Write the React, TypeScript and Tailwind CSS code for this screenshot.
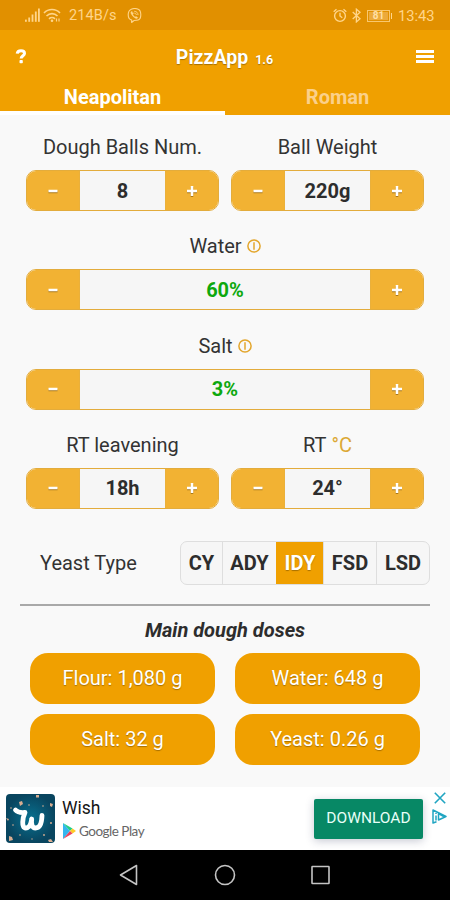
import { useState, type ReactNode } from "react";

const doses = ["Flour: 1,080 g", "Water: 648 g", "Salt: 32 g", "Yeast: 0.26 g"];

const yeasts = [
  { id: "CY", width: "w-[41px]" },
  { id: "ADY", width: "w-[54px]" },
  { id: "IDY", width: "w-[47px]" },
  { id: "FSD", width: "w-[53px]" },
  { id: "LSD", width: "w-[53px]" },
];

function StatusBar() {
  return (
    <div className="flex h-[30px] items-center justify-between bg-[#e19000] pl-[25px] pr-[15px] pt-px text-[#ffd58a]">
      <div className="flex items-center">
        <svg className="h-[15px] w-[15px]" viewBox="0 0 15 15" fill="currentColor" aria-hidden="true">
          <rect x="0" y="11.6" width="1.8" height="2.2" />
          <rect x="3.3" y="9.5" width="1.8" height="4.3" />
          <rect x="6.6" y="6.5" width="1.8" height="7.3" />
          <rect x="9.9" y="3.5" width="1.8" height="10.3" />
          <rect x="13" y="0.5" width="1.8" height="13.3" />
        </svg>
        <svg
          className="ml-[3px] h-[15px] w-[18px]"
          viewBox="0 0 18 15"
          fill="none"
          stroke="currentColor"
          strokeWidth="1.6"
          aria-hidden="true"
        >
          <path d="M1 5C5.4.4 12.600.4 17 5M3.500 8c3.200-3.200 7.800-3.200 11 0M6 10.800c1.700-1.600 4.300-1.600 6 0" />
          <circle cx="9" cy="12.800" r="1.300" fill="currentColor" stroke="none" />
          <path d="M13.500 10.400v3.200M16 10.400v3.200" strokeWidth="1.200" />
        </svg>
        <span className="ml-[8px] w-[49px] whitespace-nowrap text-[14.500px] leading-[18px] tracking-[0.1px]">
          214B/s
        </span>
        <svg
          className="ml-[9px] h-[15px] w-[15px]"
          viewBox="0 0 15 15"
          fill="none"
          stroke="currentColor"
          strokeWidth="1.1"
          strokeLinecap="round"
          aria-hidden="true"
        >
          <path d="M4.3 1.2C5.800.6 9.700.6 11.200 1.200c2 .8 2.600 2.500 2.600 5.600 0 3.200-.8 4.700-2.700 5.300-1.200.4-3.100.4-4.100.4l-2.300 2v-2.400C2.200 11.500 1.200 9.900 1.200 6.800c0-3.100 1-4.800 3.100-5.600z" />
          <path
            d="M4.700 3.500c-.8.4-1 1-.6 1.900 1 2.200 2.600 4 4.900 5 .9.400 1.400 0 1.700-.8l-1.700-1.200-.9.700C6.900 8.500 6.100 7.500 5.700 6.300l.7-.7z"
            fill="currentColor"
            strokeWidth=".5"
          />
          <path d="M7.600 3.300c2 .1 3.300 1.300 3.400 3.400M7.800 5.100c.9 0 1.400.6 1.500 1.500" strokeWidth=".9" />
        </svg>
      </div>
      <div className="flex items-center">
        <svg
          className="h-[15px] w-[14px]"
          viewBox="0 0 14 15"
          fill="none"
          stroke="currentColor"
          strokeWidth="1.4"
          aria-hidden="true"
        >
          <circle cx="7" cy="8" r="5.4" />
          <path d="M7 4.800V8l2.300 1.800M.7 3.700l2.800-2.400M13.300 3.700l-2.800-2.400" />
        </svg>
        <svg
          className="ml-[5px] h-[15px] w-[9px]"
          viewBox="0 0 9 15"
          fill="none"
          stroke="currentColor"
          strokeWidth="1.3"
          aria-hidden="true"
        >
          <path d="M.7 4l7.300 6.800-3.600 3.100V1.200L8 4.300.7 11" />
        </svg>
        <span className="ml-[6px] flex h-[12px] w-[23px] items-center justify-center border border-[#ffd58a]/80 p-px">
          <span className="flex h-full w-full items-center justify-center bg-[#f3bd62]/60 text-[10px] font-bold leading-[8px] text-[#ffe0a6]">
            81
          </span>
        </span>
        <span className="ml-px h-[6px] w-px bg-[#ffd58a]" />
        <span className="ml-[6px] w-[37px] whitespace-nowrap text-[14.700px] leading-[18px]">13:43</span>
      </div>
    </div>
  );
}

function Header({ tab, onTab }: { tab: string; onTab: (t: string) => void }) {
  return (
    <header className="bg-[#f0a000] font-bold text-white [text-shadow:0_1px_1px_rgba(60,40,0,0.4)]">
      <div className="flex h-[53px] items-center justify-between pl-[15px] pr-[16px]">
        <button type="button" aria-label="Help" className="w-[18px] text-left">
          <svg className="h-[15px] w-[12px]" viewBox="0 0 12 15" fill="none" aria-hidden="true">
            <path
              d="M2.200 4.600C2.400 2.600 3.900 1.700 6 1.700s3.500 1 3.500 2.700c0 2.200-3.400 2.500-3.400 5.200"
              stroke="white"
              strokeWidth="3"
            />
            <rect x="4.500" y="11.100" width="3.300" height="3.200" rx=".8" fill="white" />
          </svg>
        </button>
        <h1 className="flex items-baseline pt-[5px] text-[19.500px] leading-[24px]">
          PizzApp<span className="ml-[7px] text-[12.500px]">1.6</span>
        </h1>
        <button type="button" aria-label="Menu" className="flex w-[18px] flex-col gap-[2px]">
          <span className="h-[3px] w-full bg-white" />
          <span className="h-[3px] w-full bg-white" />
          <span className="h-[3px] w-full bg-white" />
        </button>
      </div>
      <div className="grid h-[32px] grid-cols-2 text-[20px] leading-[30px]">
        {["Neapolitan", "Roman"].map((t) => (
          <button
            key={t}
            type="button"
            onClick={() => onTab(t)}
            className={`border-b-[4px] pt-px font-bold leading-[27px] ${
              tab === t ? "border-white text-white" : "border-transparent text-[#fbd08a]"
            }`}
          >
            {t}
          </button>
        ))}
      </div>
    </header>
  );
}

function InfoIcon() {
  return (
    <svg
      className="ml-[5px] h-[14px] w-[14px]"
      viewBox="0 0 14 14"
      fill="none"
      stroke="#e3a62c"
      strokeWidth="1.500"
      aria-hidden="true"
    >
      <circle cx="7" cy="7" r="6.100" />
      <path d="M7 3.300v7.400" />
    </svg>
  );
}

function Stepper({ label, value, green }: { label: ReactNode; value: string; green?: boolean }) {
  const side = "flex w-[52px] shrink-0 items-center justify-center bg-[#f2b233]";
  const glyph = "h-[10px] w-[10px] drop-shadow-[0_1px_0.5px_rgba(80,50,0,0.45)]";
  return (
    <div className="flex min-w-0 flex-1 flex-col">
      <div className="flex h-[35px] items-center justify-center pb-[11px] text-[20px] leading-[24px]">{label}</div>
      <div className="flex h-[41px] overflow-hidden rounded-[10px] border border-[#e3ac3c] bg-[#f6f6f6]">
        <button type="button" aria-label="Decrease" className={side}>
          <svg className={glyph} viewBox="0 0 10 10" aria-hidden="true">
            <path d="M.5 5h9" stroke="white" strokeWidth="2.500" />
          </svg>
        </button>
        <div
          className={`flex flex-1 items-center justify-center border-x border-[#eab03b] text-[20px] font-bold leading-[24px] ${
            green ? "text-[#0da80d]" : "text-[#2d2d2d]"
          }`}
        >
          {value}
        </div>
        <button type="button" aria-label="Increase" className={side}>
          <svg className={glyph} viewBox="0 0 10 10" aria-hidden="true">
            <path d="M0 5h10M5 0v10" stroke="white" strokeWidth="2.500" />
          </svg>
        </button>
      </div>
    </div>
  );
}

function AdBanner() {
  return (
    <div className="flex h-[63px] bg-white pl-[6px]">
      <svg className="mt-[7px] h-[49px] w-[49px]" viewBox="0 0 49 49" aria-hidden="true">
        <defs>
          <radialGradient id="wish">
            <stop offset="0" stopColor="#08708f" />
            <stop offset="1" stopColor="#09455f" />
          </radialGradient>
        </defs>
        <rect width="49" height="49" rx="4" fill="url(#wish)" />
        <g fill="#d8ad91">
          <path d="M30 1h3v2.500h-3zM13 8l3-1 1 3-3 2zM3 42l3 1 1 3-4 1zM44 9l3 1-1 3-2-1zM0 24l3 1-1 2zM42 46l3-1 2 3h-4z" />
          <circle cx="23" cy="11" r=".8" />
          <circle cx="37" cy="12" r=".8" />
          <circle cx="45" cy="29" r="1" />
          <circle cx="14" cy="41" r=".8" />
          <circle cx="38" cy="41" r=".9" />
          <circle cx="5" cy="14" r=".8" />
          <circle cx="26" cy="45" r=".7" />
          <circle cx="7" cy="31" r=".8" />
        </g>
        <path
          d="M9.500 16c2 2.300 5.500 2.800 9.500 2.400-2.300 5-4 15.600.8 15.600 3.600 0 5.200-4.500 5.900-9-.7 5 .3 9 3.900 9 4.600 0 6.200-6 6.400-12.500"
          fill="none"
          stroke="white"
          strokeWidth="4.800"
          strokeLinecap="round"
          strokeLinejoin="round"
        />
      </svg>
      <div className="ml-[7px] flex-1 pt-[11px]">
        <div className="text-[17.500px] leading-[20px] text-[#151515]">Wish</div>
        <div className="mt-[4px] flex items-center">
          <svg className="ml-px h-[16px] w-[13px]" viewBox="0 0 13 16" aria-hidden="true">
            <path d="M0 0v16l7-8z" fill="#35b6ee" />
            <path d="M0 0l9.500 5.500L7 8z" fill="#20cf88" />
            <path d="M9.500 5.500L13 8l-3.500 2.500L7 8z" fill="#ffcb26" />
            <path d="M0 16l9.500-5.500L7 8z" fill="#ed435c" />
          </svg>
          <span className="ml-[3px] whitespace-nowrap font-['Lato',sans-serif] text-[13.500px] leading-[18px] tracking-[-0.5px] text-[#666]">
            Google Play
          </span>
        </div>
      </div>
      <button
        type="button"
        className="mt-[12px] h-[40px] w-[109px] rounded-[2px] bg-[#078865] text-[15.500px] text-[#e8fff7] shadow-[0_2px_8px_rgba(30,40,80,0.25)]"
      >
        DOWNLOAD
      </button>
      <div className="flex w-[27px] flex-col items-center pl-[6px] pt-[5px]">
        <svg className="h-[12px] w-[12px]" viewBox="0 0 12 12" stroke="#20a5c2" strokeWidth="1.600" aria-hidden="true">
          <path d="M.8.8l10.400 10.400M11.200.8L.8 11.200" />
        </svg>
        <svg
          className="mt-[5px] h-[15px] w-[15px]"
          viewBox="0 0 15 15"
          fill="none"
          stroke="#20a5c2"
          strokeWidth="1.500"
          strokeLinejoin="round"
          aria-hidden="true"
        >
          <path d="M4.500 12.800 1 14V1l13 6.500L6.500 11V4.500l5.200 3" />
          <path d="M4 3.800v1.300M4 6.500v5" />
        </svg>
      </div>
    </div>
  );
}

function NavBar() {
  return (
    <div className="flex h-[50px] items-center justify-between bg-black px-[119px]">
      <svg
        className="h-[22px] w-[19px]"
        viewBox="0 0 19 22"
        fill="none"
        stroke="#c4c4c4"
        strokeWidth="1.600"
        strokeLinejoin="round"
        aria-hidden="true"
      >
        <path d="M17.500 1.500v19L1.500 11z" />
      </svg>
      <svg className="h-[22px] w-[22px]" viewBox="0 0 22 22" fill="none" stroke="#c4c4c4" strokeWidth="1.600" aria-hidden="true">
        <circle cx="11" cy="11" r="9.500" />
      </svg>
      <svg className="h-[20px] w-[20px]" viewBox="0 0 20 20" fill="none" stroke="#c4c4c4" strokeWidth="1.600" aria-hidden="true">
        <rect x="1" y="1.500" width="17" height="17" rx=".5" />
      </svg>
    </div>
  );
}

export default function App() {
  const [tab, setTab] = useState("Neapolitan");
  const [yeast, setYeast] = useState("IDY");

  return (
    <div className="flex h-[900px] w-[450px] flex-col overflow-hidden bg-[#f9f9f9] font-['Roboto',sans-serif] text-[#333]">
      <StatusBar />
      <Header tab={tab} onTab={setTab} />

      <main className="flex flex-1 flex-col pt-[20px]">
        <div className="flex flex-col gap-[23.300px] px-[26px]">
          <div className="flex gap-[12px]">
            <Stepper label="Dough Balls Num." value="8" />
            <Stepper label="Ball Weight" value="220g" />
          </div>
          <Stepper label={<>Water<InfoIcon /></>} value="60%" green />
          <Stepper label={<>Salt<InfoIcon /></>} value="3%" green />
          <div className="flex gap-[12px]">
            <Stepper label="RT leavening" value="18h" />
            <Stepper label={<>RT&nbsp;<span className="text-[#dca936]">°C</span></>} value="24°" />
          </div>
        </div>

        <div className="mt-[32px] flex items-center justify-between pl-[40px] pr-[20px]">
          <span className="text-[20px]">Yeast Type</span>
          <div className="flex h-[44px] overflow-hidden rounded-[7px] border border-[#dedede] bg-[#f6f6f6]">
            {yeasts.map((y, i) => (
              <button
                key={y.id}
                type="button"
                onClick={() => setYeast(y.id)}
                className={`${y.width} text-[20px] font-bold ${i > 0 ? "border-l" : ""} ${
                  yeast === y.id
                    ? "border-[#f0a000] bg-[#f0a000] text-white [text-shadow:0_1px_1px_rgba(60,40,0,0.4)]"
                    : "border-[#dedede] text-[#2d2d2d]"
                }`}
              >
                {y.id}
              </button>
            ))}
          </div>
        </div>

        <hr className="mx-[20px] mt-[19px] h-[2px] border-0 bg-[#a9a9a9]" />
        <h2 className="mt-[12px] text-center text-[20px] font-bold italic leading-[24px] text-[#2d2d2d]">
          Main dough doses
        </h2>
        <div className="mt-[11px] grid grid-cols-2 gap-x-[20px] gap-y-[10px] px-[30px]">
          {doses.map((d) => (
            <div
              key={d}
              className="flex h-[51px] items-center justify-center rounded-[18px] bg-[#f0a000] text-[20px] text-white [text-shadow:0_1px_1px_rgba(60,40,0,0.4)]"
            >
              {d}
            </div>
          ))}
        </div>
      </main>

      <AdBanner />
      <NavBar />
    </div>
  );
}
